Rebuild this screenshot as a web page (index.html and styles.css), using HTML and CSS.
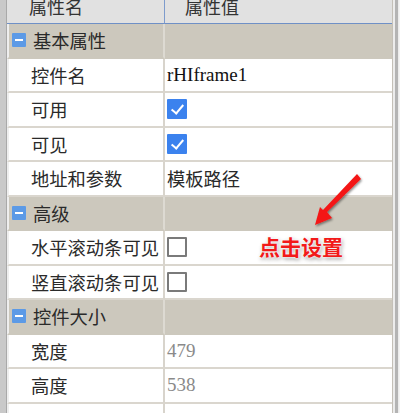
FILE: index.html
```html
<!DOCTYPE html>
<html lang="zh-CN">
<head>
    <meta charset="UTF-8">
    <title>属性面板</title>
    <link rel="stylesheet" href="styles.css">
</head>
<body>
    <div class="frame">
        <div class="edge-left"></div>

        <!-- Property grid -->
        <div class="grid">
            <div class="head"><span>属性名</span></div>
            <div class="head head-val"><span>属性值</span></div>

            <div class="group name"><span class="fold"></span>基本属性</div>
            <div class="group val"></div>

            <div class="cell name">控件名</div>
            <div class="cell val mono">rHIframe1</div>

            <div class="cell name">可用</div>
            <div class="cell val"><span class="check on"></span></div>

            <div class="cell name">可见</div>
            <div class="cell val"><span class="check on"></span></div>

            <div class="cell name">地址和参数</div>
            <div class="cell val">模板路径</div>

            <div class="group name"><span class="fold"></span>高级</div>
            <div class="group val"></div>

            <div class="cell name">水平滚动条可见</div>
            <div class="cell val"><span class="check"></span></div>

            <div class="cell name">竖直滚动条可见</div>
            <div class="cell val"><span class="check"></span></div>

            <div class="group name"><span class="fold"></span>控件大小</div>
            <div class="group val"></div>

            <div class="cell name">宽度</div>
            <div class="cell val mono dim">479</div>

            <div class="cell name">高度</div>
            <div class="cell val mono dim">538</div>

            <div class="cell name last"></div>
            <div class="cell val last"></div>
        </div>

        <div class="edge-right"><div class="bar"></div></div>

        <!-- Annotation -->
        <svg class="arrow" width="400" height="413" viewBox="0 0 400 413">
            <defs>
                <filter id="shade" x="-20%" y="-20%" width="140%" height="140%">
                    <feDropShadow dx="1" dy="1.5" stdDeviation="1.2" flood-color="#000" flood-opacity="0.45"/>
                </filter>
            </defs>
            <g filter="url(#shade)" fill="#f41414">
                <path d="M357 174 L361 179 L327 212 L332 218 L315 225 L320 207 L323 210 Z"/>
            </g>
        </svg>
        <div class="note">点击设置</div>
    </div>
</body>
</html>
```

FILE: styles.css
```css
body {
    margin: 0;
    background: #ffffff;
    font-family: "Noto Sans CJK SC", "Noto Sans", sans-serif;
    overflow: hidden;
}

.frame {
    position: relative;
    display: flex;
    width: 400px;
    height: 413px;
    overflow: hidden;
}

.edge-left {
    width: 6px;
    background: #c9c9c9;
    border-right: 1px solid #a9a9a9;
    flex-shrink: 0;
}

.grid {
    display: grid;
    grid-template-columns: 158px 227px;
    grid-template-rows: 24px repeat(11, 34.5px) 20px;
    align-content: start;
    flex-shrink: 0;
    border-right: 1px solid #c4c0b8;
}

/* Header row, scrolled a little out of view */
.head {
    display: flex;
    align-items: flex-end;
    overflow: hidden;
    background: #e1e1e1;
    border-bottom: 1px solid #6f90c6;
    border-right: 1px solid #7d9bcc;
    padding: 0 0 8px 22px;
    font-size: 18px;
    line-height: 18px;
    color: #333;
    box-sizing: border-box;
}

.head-val {
    border-right: 0;
    padding-left: 20px;
}

.cell,
.group {
    display: flex;
    align-items: center;
    box-sizing: border-box;
    font-size: 18.3px;
    color: #2a2a2a;
    border-bottom: 2px solid #dad6ce;
}

.cell.name {
    padding-left: 22px;
    border-right: 2px solid #d8d4cc;
    border-left: 2px solid #eeeeee;
}

.cell.val {
    padding-left: 2px;
}

.cell.last {
    border-bottom: 0;
}

.group {
    background: #ccc8bd;
    border-bottom-color: #ccc8bd;
}

.group.name {
    padding-left: 3px;
    gap: 7px;
    border-right: 2px solid #dddad2;
    border-left: 2px solid #eeeeee;
}

.fold {
    position: relative;
    width: 14px;
    height: 14px;
    background: #5c9ae6;
    border-radius: 1px;
}

.fold::after {
    content: "";
    position: absolute;
    left: 3px;
    top: 6px;
    width: 8px;
    height: 2px;
    background: #ffffff;
}

.mono {
    font-family: "Liberation Serif", "DejaVu Serif", serif;
    font-size: 19px;
    color: #111;
}

.dim {
    color: #8a8a8a;
}

.check {
    position: relative;
    width: 20px;
    height: 20px;
    box-sizing: border-box;
    border: 2px solid #7a7a7a;
    border-radius: 1px;
    background: #ffffff;
}

.check.on {
    border: 0;
    background: #3b82ee;
}

.check.on::after {
    content: "";
    position: absolute;
    left: 7px;
    top: 3px;
    width: 5px;
    height: 10px;
    border-right: 2.5px solid #ffffff;
    border-bottom: 2.5px solid #ffffff;
    transform: rotate(40deg);
}

.edge-right {
    flex: 1;
    display: flex;
    background: #ececec;
    padding-left: 2px;
}

.edge-right .bar {
    width: 3px;
    background: #b4b4b4;
    margin-right: 1px;
}

.edge-right::after {
    content: "";
    flex: 1;
    background: #f4f4f4;
}

/* Red annotation over the grid */
.arrow {
    position: absolute;
    left: 0;
    top: 0;
    pointer-events: none;
}

.note {
    position: absolute;
    left: 259px;
    top: 233px;
    font-size: 21px;
    font-weight: bold;
    line-height: 26px;
    color: #f21a1a;
    text-shadow: 0 0 2px #fff, 0 0 3px #fff, 1px 2px 4px rgba(0, 0, 0, 0.45);
}
```
